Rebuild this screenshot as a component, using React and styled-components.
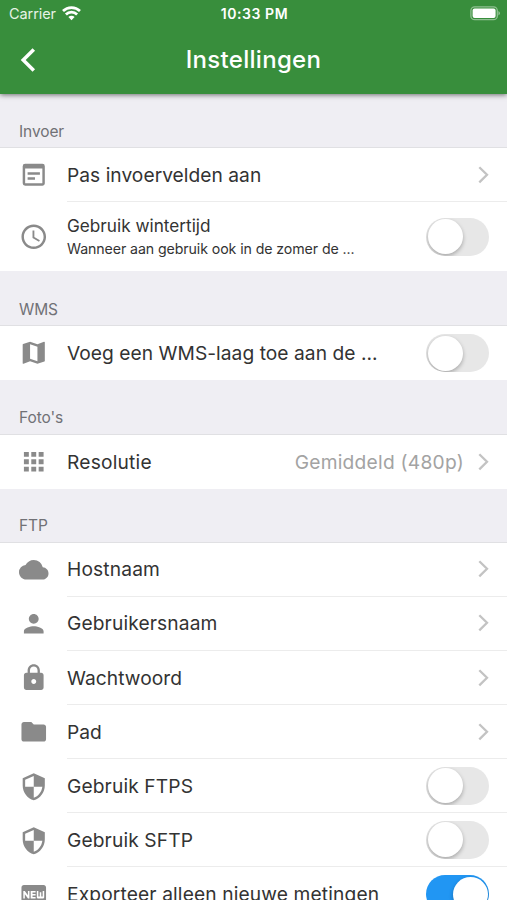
import React from "react";
import styled, { createGlobalStyle } from "styled-components";
import {
  MdWysiwyg,
  MdAccessTime,
  MdMap,
  MdApps,
  MdCloud,
  MdPerson,
  MdLock,
  MdFolder,
  MdSecurity,
  MdFiberNew,
} from "react-icons/md";

const GlobalStyle = createGlobalStyle`
  * { box-sizing: border-box; }
  html, body { margin: 0; padding: 0; height: 900px; overflow: hidden; }
  body { font-family: Inter, "Liberation Sans", sans-serif; background: #efeef3; }
`;

const Screen = styled.div`
  width: 507px;
  height: 900px;
  overflow: hidden;
  display: flex;
  flex-direction: column;
  background: #efeef3;
`;

const AppBar = styled.header`
  flex: none;
  height: 94px;
  background: #388e3c;
  color: #fff;
  box-shadow: 0 1px 5px rgba(0, 0, 0, 0.55);
  z-index: 1;
`;

const StatusBar = styled.div`
  height: 27px;
  padding: 0 7px 0 9px;
  display: grid;
  grid-template-columns: 1fr auto 1fr;
  align-items: center;
`;

const Carrier = styled.div`
  display: flex;
  align-items: center;
  gap: 6px;
  font-size: 14.5px;
  letter-spacing: -0.08px;
  color: #e6f3e6;
`;

const Clock = styled.div`
  font-size: 14px;
  font-weight: 600;
  letter-spacing: 0.55px;
`;

const Battery = styled.svg`
  justify-self: end;
  display: block;
`;

const NavBar = styled.div`
  height: 65px;
  padding: 0 19px;
  display: grid;
  grid-template-columns: 1fr auto 1fr;
  align-items: center;
`;

const BackButton = styled.button`
  width: 18px;
  height: 26px;
  padding: 0;
  border: 0;
  background: none;
  color: #fff;

  svg { display: block; }
`;

const Title = styled.h1`
  margin: 0;
  font-size: 24px;
  line-height: 30px;
  font-weight: 500;
  letter-spacing: 0.3px;
`;

const SectionTitle = styled.h2`
  flex: none;
  margin: 0;
  height: ${(p) => p.$height}px;
  padding: 0 19px 5.5px;
  display: flex;
  align-items: flex-end;
  border-bottom: 1px solid #e0e0e3;
  font-size: 15.5px;
  line-height: 20px;
  font-weight: 400;
  letter-spacing: -0.1px;
  color: #717176;
`;

const List = styled.ul`
  flex: none;
  margin: 0;
  padding: 0;
  list-style: none;
  background: #fff;
`;

const Row = styled.li`
  height: ${(p) => (p.$tall ? 69.4 : 54.1)}px;
  padding-left: 19px;
  display: flex;
  align-items: stretch;
`;

const IconSlot = styled.div`
  width: 48px;
  flex: none;
  display: flex;
  align-items: center;
  color: #8a8a8a;

  svg { width: 29.5px; height: 29.5px; }
`;

const RowBody = styled.div`
  flex: 1;
  min-width: 0;
  padding-right: 18px;
  display: flex;
  align-items: center;
  justify-content: space-between;
  border-bottom: ${(p) => (p.$last ? "0" : "1px solid #ececec")};
`;

const Labels = styled.div`
  min-width: 0;
`;

const Label = styled.div`
  font-size: ${(p) => (p.$small ? 17.2 : 19.2)}px;
  line-height: ${(p) => (p.$small ? 22 : 26)}px;
  letter-spacing: ${(p) => p.$track || 0}px;
  color: #333;
  white-space: nowrap;
`;

const Description = styled.div`
  padding-top: 1px;
  font-size: 14.2px;
  line-height: 21px;
  letter-spacing: -0.1px;
  color: #333;
  white-space: nowrap;
`;

const Trailing = styled.div`
  flex: none;
  display: flex;
  align-items: center;
  gap: 13px;

  svg { display: block; }
`;

const Value = styled.span`
  font-size: 19.2px;
  line-height: 26px;
  letter-spacing: 0.25px;
  color: #a3a3a3;
`;

const Switch = styled.button`
  width: 63px;
  height: 38px;
  padding: 1.5px;
  border: 0;
  border-radius: 19px;
  display: flex;
  justify-content: ${(p) => (p.$on ? "flex-end" : "flex-start")};
  background: ${(p) => (p.$on ? "#2196f3" : "#e7e7e7")};
  overflow: hidden;
`;

const Thumb = styled.span`
  width: 35px;
  height: 35px;
  border-radius: 50%;
  background: #fff;
  box-shadow: 0 2px 4px rgba(0, 0, 0, 0.28);
`;

const Chevron = () => (
  <svg width="12" height="18" viewBox="0 0 12 18" fill="none">
    <path d="M2.3 1.2 10 8.8 2.3 16.4" stroke="#c3c3c3" strokeWidth="2.3" />
  </svg>
);

const Wifi = () => (
  <svg width="19" height="15" viewBox="0 0 19 15" fill="none" stroke="#fff" strokeWidth="2.7">
    <path d="M1 5a12.2 12.2 0 0 1 17 0" />
    <path d="M3.9 8.5a7.8 7.8 0 0 1 11.2 0" />
    <path d="M9.5 14.2 6.4 11a4.4 4.4 0 0 1 6.2 0Z" fill="#fff" stroke="none" />
  </svg>
);

const sections = [
  {
    title: "Invoer",
    height: 54,
    rows: [
      { icon: MdWysiwyg, label: "Pas invoervelden aan", control: "link", track: 0.03 },
      {
        icon: MdAccessTime,
        label: "Gebruik wintertijd",
        description: "Wanneer aan gebruik ook in de zomer de ...",
        control: "switch",
      },
    ],
  },
  {
    title: "WMS",
    height: 54.6,
    rows: [
      { icon: MdMap, label: "Voeg een WMS-laag toe aan de ...", control: "switch", track: 0.04 },
    ],
  },
  {
    title: "Foto's",
    height: 54.4,
    rows: [
      { icon: MdApps, label: "Resolutie", value: "Gemiddeld (480p)", control: "link", track: 0.2 },
    ],
  },
  {
    title: "FTP",
    height: 54.2,
    rows: [
      { icon: MdCloud, label: "Hostnaam", control: "link", track: 0.15 },
      { icon: MdPerson, label: "Gebruikersnaam", control: "link", track: 0.12 },
      { icon: MdLock, label: "Wachtwoord", control: "link", track: 0.05 },
      { icon: MdFolder, label: "Pad", control: "link" },
      { icon: MdSecurity, label: "Gebruik FTPS", control: "switch", track: 0.12 },
      { icon: MdSecurity, label: "Gebruik SFTP", control: "switch", track: 0.12 },
      {
        icon: MdFiberNew,
        label: "Exporteer alleen nieuwe metingen",
        control: "switch",
        on: true,
        track: 0.13,
      },
    ],
  },
];

function SettingRow({ item, last }) {
  const Icon = item.icon;
  return (
    <Row $tall={Boolean(item.description)}>
      <IconSlot>
        <Icon />
      </IconSlot>
      <RowBody $last={last}>
        <Labels>
          <Label $small={Boolean(item.description)} $track={item.track}>
            {item.label}
          </Label>
          {item.description && <Description>{item.description}</Description>}
        </Labels>
        <Trailing>
          {item.value && <Value>{item.value}</Value>}
          {item.control === "link" ? (
            <Chevron />
          ) : (
            <Switch $on={item.on} role="switch" aria-checked={Boolean(item.on)} aria-label={item.label}>
              <Thumb />
            </Switch>
          )}
        </Trailing>
      </RowBody>
    </Row>
  );
}

export default function App() {
  return (
    <Screen>
      <GlobalStyle />
      <AppBar>
        <StatusBar>
          <Carrier>
            <span>Carrier</span>
            <Wifi />
          </Carrier>
          <Clock>10:33 PM</Clock>
          <Battery width="30" height="15" viewBox="0 0 30 15">
            <rect x="0.9" y="0.9" width="26.4" height="12.8" rx="3.8" fill="none" stroke="#8fc091" strokeWidth="1.3" />
            <rect x="2.6" y="2.6" width="23" height="9.4" rx="2" fill="#fff" />
            <path d="M28.4 5v4.6q1.6-.8 1.6-2.3T28.4 5Z" fill="#8fc091" />
          </Battery>
        </StatusBar>
        <NavBar>
          <BackButton aria-label="Terug">
            <svg width="18" height="26" viewBox="0 0 18 26" fill="none">
              <path d="M14.8 2.4 4.2 13l10.6 10.6" stroke="#fff" strokeWidth="3.5" />
            </svg>
          </BackButton>
          <Title>Instellingen</Title>
        </NavBar>
      </AppBar>
      {sections.map((section) => (
        <React.Fragment key={section.title}>
          <SectionTitle $height={section.height}>{section.title}</SectionTitle>
          <List>
            {section.rows.map((item, i) => (
              <SettingRow key={item.label} item={item} last={i === section.rows.length - 1} />
            ))}
          </List>
        </React.Fragment>
      ))}
    </Screen>
  );
}
